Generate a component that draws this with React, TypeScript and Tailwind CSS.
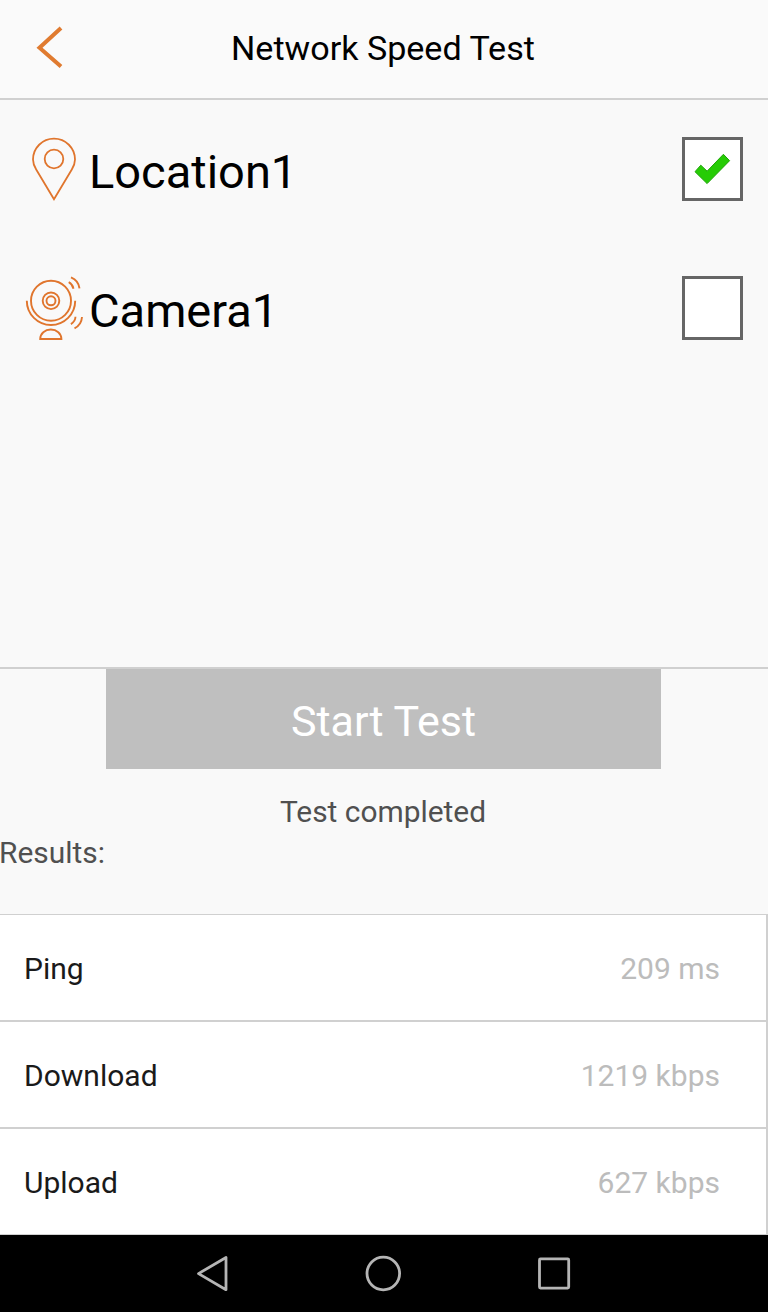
import React, { useState } from 'react';

const PinIcon: React.FC = () => (
  <svg className="w-16 h-[70px] shrink-0" viewBox="24 134 64 70" fill="none" stroke="#e0752d" strokeWidth="1.8">
    <path d="M54 199.300L36.200 169.500C34 166 33 163 33 159.600a21 21 0 0 1 42 0c0 3.400-1 6.400-3.200 9.900z" />
    <circle cx="54" cy="159" r="9.300" />
  </svg>
);

const CameraIcon: React.FC = () => (
  <svg className="w-16 h-[70px] shrink-0" viewBox="24 273 64 70" fill="none" stroke="#e0752d" strokeWidth="1.9">
    <circle cx="51" cy="300.800" r="20" />
    <circle cx="51" cy="300.800" r="8.300" />
    <circle cx="51" cy="300.800" r="4.500" />
    <path d="M26.800 300.800a24.200 24.200 0 0 0 48.400 0" />
    <path d="M40.200 339c0-5.500 4.800-9.500 10.600-9.500s10.600 4 10.600 9.500z" />
    <path d="M68.700 282.200c2.500 1.300 4.200 3.600 4.800 6.500M71 277.300c4.800 2 7.900 6 8.500 11" />
    <path d="M75.500 316.800c-.2 3.400-1.700 5.700-4.600 7.300M82 317c-.3 5-2.800 9-7.500 11.300" />
  </svg>
);

const CheckMark: React.FC = () => (
  <svg className="w-[38px] h-8" viewBox="694 152.500 38 32">
    <path
      d="M695 171.200l5.800-6.500 6.300 6 16.300-16.900 6.200 6.400-22.500 22.900z"
      fill="#26cc05"
      stroke="#1da407"
      strokeWidth="1"
    />
  </svg>
);

const results = [
  { label: 'Ping', value: '209 ms' },
  { label: 'Download', value: '1219 kbps' },
  { label: 'Upload', value: '627 kbps' },
];

const App: React.FC = () => {
  const [selected, setSelected] = useState('Location1');

  const devices = [
    { name: 'Location1', icon: <PinIcon /> },
    { name: 'Camera1', icon: <CameraIcon /> },
  ];

  return (
    <div className="w-[768px] h-[1312px] flex flex-col overflow-hidden bg-[#f9f9f9] font-[Roboto,sans-serif] text-black">
      <header className="h-[100px] shrink-0 grid grid-cols-[100px_1fr_100px] items-center border-b-2 border-[#d0d0d0] bg-[#fafafa]">
        <button className="pl-9 pb-1" aria-label="Back">
          <svg className="w-7 h-11" viewBox="36 25 28 44" fill="none" stroke="#e07b30" strokeWidth="4">
            <path d="M61 28L39.500 47.800 61 66.500" />
          </svg>
        </button>
        <h1 className="pr-0.5 pb-[3px] text-center text-[34.1px] leading-[40px]">Network Speed Test</h1>
      </header>

      <div className="h-[569px] shrink-0 border-b-2 border-[#d0d0d0]">
        <div className="-mt-px">
          {devices.map((device) => (
            <div key={device.name} className="h-[139px] flex items-center pl-6 pr-[25px]">
              {device.icon}
              <span className="grow pt-1.5 pl-px text-[47px] leading-[56px]">{device.name}</span>
              <button
                onClick={() => setSelected(device.name)}
                aria-label={device.name}
                className="w-[61px] h-16 flex items-center justify-center border-3 border-[#666666] bg-white"
              >
                {selected === device.name && <CheckMark />}
              </button>
            </div>
          ))}
        </div>
      </div>

      <button className="w-[555px] h-[100px] shrink-0 ml-[106px] pt-1 bg-[#bfbfbf] text-[43px] text-white">
        Start Test
      </button>
      <p className="mt-[23px] pr-[2px] text-center text-[29.9px] leading-[40px] text-[#505050]">Test completed</p>
      <p className="-ml-px mt-px text-[29.9px] leading-[40px] text-[#505050]">Results:</p>

      <div className="mt-[41px] w-[768px] flex flex-col gap-[2px] border-t border-r-2 border-b border-[#d0d0d0] bg-[#d0d0d0]">
        {results.map((row) => (
          <div key={row.label} className="h-[105px] flex items-center justify-between bg-white pl-6 pr-[46px] pt-0.5 text-[30px]">
            <span className="text-[#1a1a1a]">{row.label}</span>
            <span className="text-[#bcbcbc]">{row.value}</span>
          </div>
        ))}
      </div>

      <nav className="grow flex items-center bg-black">
        <svg className="w-full h-[77px]" viewBox="0 1235 768 77" fill="none" stroke="#b5b5b5" strokeWidth="2.800" strokeLinejoin="round">
          <path d="M198.500 1273.600L226 1257.500v32.200z" />
          <circle cx="383.300" cy="1273.500" r="16.300" />
          <rect x="539.500" y="1258.900" width="29.200" height="29.200" rx="1" />
        </svg>
      </nav>
    </div>
  );
};

export default App;
